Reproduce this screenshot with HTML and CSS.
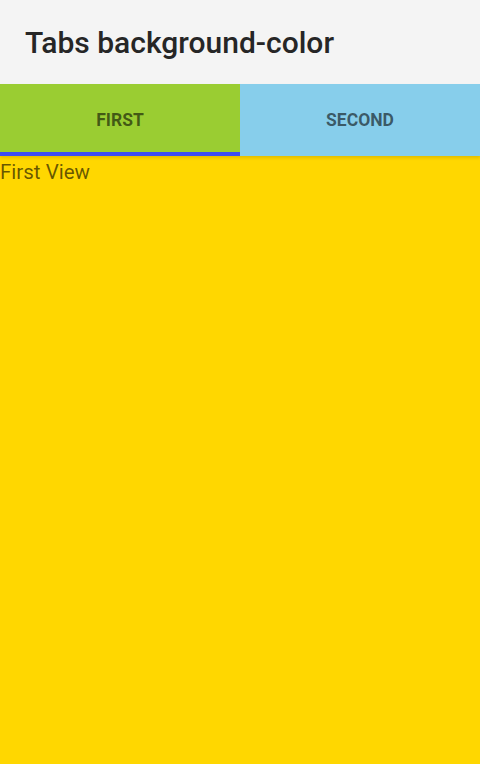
FILE: index.html
```html
<!DOCTYPE html>
<html>
<head>
<meta charset="utf-8">
<link rel="stylesheet" href="styles.css">
</head>
<body>
<div class="app">
  <header class="toolbar">
    <h1 class="title">Tabs background-color</h1>
  </header>
  <nav class="tabbar">
    <div class="tab tab-first selected">FIRST</div>
    <div class="tab tab-second">SECOND</div>
  </nav>
  <main class="content">
    <div class="view-text">First View</div>
  </main>
</div>
</body>
</html>
```
FILE: styles.css
```css
html, body {
  margin: 0;
  padding: 0;
  height: 100%;
}
body {
  font-family: Roboto, "Noto Sans", sans-serif;
  background: #ffd700;
}
.app {
  display: flex;
  flex-direction: column;
  height: 764px;
}
.toolbar {
  height: 84px;
  background: #f4f4f4;
  display: flex;
  align-items: center;
  padding: 0 25px;
  box-sizing: border-box;
}
.title {
  margin: 0;
  font-size: 30px;
  font-weight: 500;
  color: #262626;
  letter-spacing: 0;
  padding-top: 1px;
}
.tabbar {
  display: flex;
  height: 72px;
  position: relative;
  z-index: 2;
  box-shadow: 0 2px 3px rgba(0,0,0,0.12);
}
.tab {
  flex: 1;
  display: flex;
  align-items: center;
  justify-content: center;
  font-size: 17.5px;
  font-weight: 700;
  color: rgba(0,0,0,0.58);
  box-sizing: border-box;
}
.tab-first { background: #9acd32; }
.tab-second { background: #87ceeb; }
.tab.selected {
  border-bottom: 4px solid #3b4cf5;
  padding-top: 4px;
}
.content {
  flex: 1;
  background: #ffd700;
}
.view-text {
  font-size: 20.5px;
  color: rgba(0,0,0,0.6);
  line-height: 32px;
}
```
